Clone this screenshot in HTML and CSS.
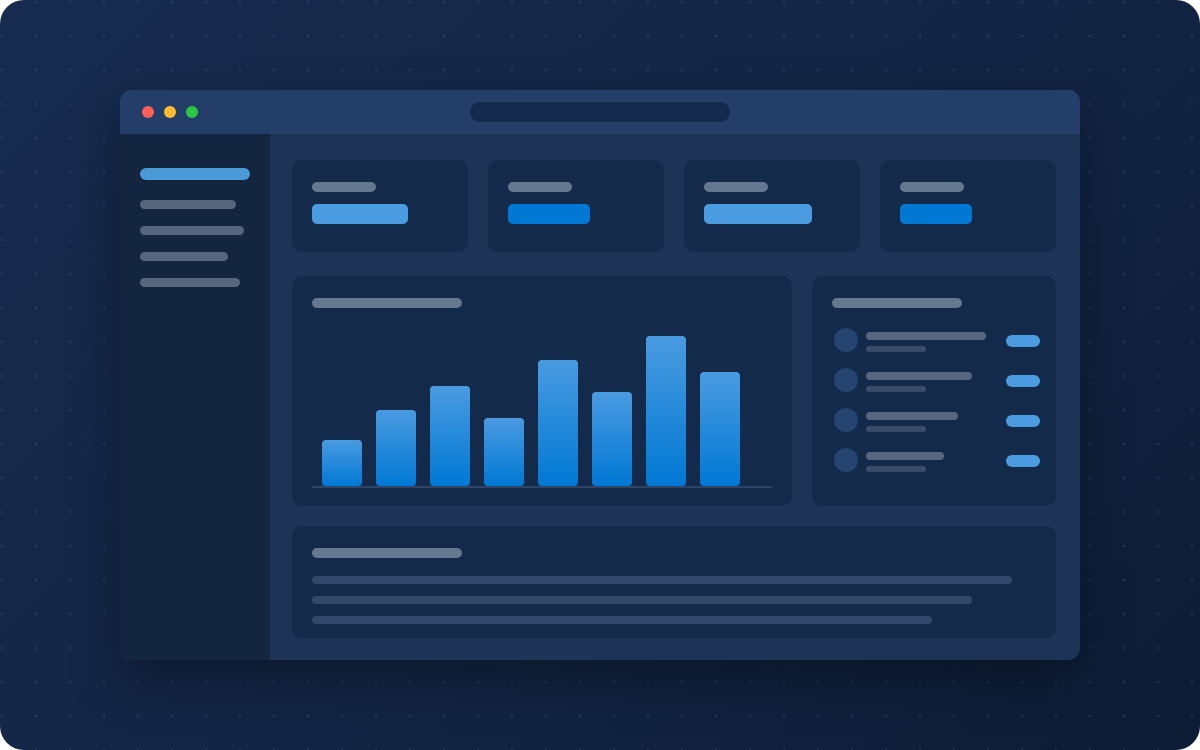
FILE: index.html
```html
<!DOCTYPE html>
<html lang="en">
<head>
<meta charset="utf-8">
<title>Dashboard</title>
<link rel="stylesheet" href="styles.css">
</head>
<body>
<div class="stage">
  <div class="window">
    <div class="titlebar">
      <div class="lights">
        <span class="light red"></span>
        <span class="light yellow"></span>
        <span class="light green"></span>
      </div>
      <div class="address"></div>
    </div>
    <div class="body">
      <aside class="sidebar">
        <div class="nav active"></div>
        <div class="nav" style="width:96px"></div>
        <div class="nav" style="width:104px"></div>
        <div class="nav" style="width:88px"></div>
        <div class="nav" style="width:100px"></div>
      </aside>
      <main class="main">
        <div class="stats">
          <div class="card stat">
            <div class="label"></div>
            <div class="value light-blue" style="width:96px"></div>
          </div>
          <div class="card stat">
            <div class="label"></div>
            <div class="value blue" style="width:82px"></div>
          </div>
          <div class="card stat">
            <div class="label"></div>
            <div class="value light-blue" style="width:108px"></div>
          </div>
          <div class="card stat">
            <div class="label"></div>
            <div class="value blue" style="width:72px"></div>
          </div>
        </div>
        <div class="row">
          <div class="card chart-card">
            <div class="title" style="width:150px"></div>
            <div class="chart">
              <div class="bar" style="height:46px"></div>
              <div class="bar" style="height:76px"></div>
              <div class="bar" style="height:100px"></div>
              <div class="bar" style="height:68px"></div>
              <div class="bar" style="height:126px"></div>
              <div class="bar" style="height:94px"></div>
              <div class="bar" style="height:150px"></div>
              <div class="bar" style="height:114px"></div>
            </div>
          </div>
          <div class="card list-card">
            <div class="title" style="width:130px"></div>
            <div class="list">
              <div class="item">
                <div class="avatar"></div>
                <div class="lines"><div class="l1" style="width:120px"></div><div class="l2"></div></div>
                <div class="pill"></div>
              </div>
              <div class="item">
                <div class="avatar"></div>
                <div class="lines"><div class="l1" style="width:106px"></div><div class="l2"></div></div>
                <div class="pill"></div>
              </div>
              <div class="item">
                <div class="avatar"></div>
                <div class="lines"><div class="l1" style="width:92px"></div><div class="l2"></div></div>
                <div class="pill"></div>
              </div>
              <div class="item">
                <div class="avatar"></div>
                <div class="lines"><div class="l1" style="width:78px"></div><div class="l2"></div></div>
                <div class="pill"></div>
              </div>
            </div>
          </div>
        </div>
        <div class="card text-card">
          <div class="title" style="width:150px"></div>
          <div class="tline" style="width:700px"></div>
          <div class="tline" style="width:660px"></div>
          <div class="tline" style="width:620px"></div>
        </div>
      </main>
    </div>
  </div>
</div>
</body>
</html>
```
FILE: styles.css
```css
* { box-sizing: border-box; }
html, body { margin: 0; padding: 0; background: #ffffff; }
body { font-family: "Liberation Sans", Arial, sans-serif; }

.stage {
  width: 1200px;
  height: 750px;
  border-radius: 24px;
  overflow: hidden;
  padding: 90px 120px;
  background-color: #132645;
  background-image:
    radial-gradient(circle, rgba(120,150,200,0.2) 0.9px, transparent 1.4px),
    linear-gradient(135deg, #172b4f 0%, #132544 55%, #0d1c35 100%);
  background-size: 34px 34px, 100% 100%;
  background-position: -15px -15px, 0 0;
}

.window {
  width: 960px;
  height: 570px;
  border-radius: 12px;
  overflow: hidden;
  display: flex;
  flex-direction: column;
  background: #1d3457;
  box-shadow: 0 20px 50px rgba(0,0,0,0.35);
}

.titlebar {
  height: 44px;
  flex: none;
  background: #233f69;
  display: flex;
  align-items: center;
  position: relative;
  padding-left: 22px;
}
.lights { display: flex; gap: 10px; }
.light { width: 12px; height: 12px; border-radius: 50%; display: block; }
.red { background: #ff5f57; }
.yellow { background: #febc2e; }
.green { background: #28c840; }
.address {
  position: absolute;
  left: 350px;
  top: 12px;
  width: 260px;
  height: 20px;
  border-radius: 10px;
  background: #152a4c;
}

.body { flex: 1; display: flex; min-height: 0; }

.sidebar {
  width: 150px;
  flex: none;
  background: #14253f;
  padding: 34px 20px 0;
  display: flex;
  flex-direction: column;
  gap: 17px;
}
.nav { height: 9px; border-radius: 5px; background: #56667c; }
.nav.active { width: 110px; height: 12px; border-radius: 6px; background: #4a9ad8; margin-bottom: 3px; }

.main {
  flex: 1;
  padding: 26px 24px 22px 22px;
  display: flex;
  flex-direction: column;
}

.card { background: #132a4b; border-radius: 10px; }

.stats { display: flex; gap: 20px; height: 92px; flex: none; }
.stat { flex: 1; padding: 22px 20px; display: flex; flex-direction: column; gap: 12px; }
.label { width: 64px; height: 10px; border-radius: 5px; background: #66788f; }
.value { height: 20px; border-radius: 5px; }
.light-blue { background: #4a9be0; }
.blue { background: #0078d4; }

.row { display: flex; gap: 20px; height: 230px; margin-top: 24px; flex: none; }

.title { height: 10px; border-radius: 5px; background: #66788f; flex: none; }

.chart-card { width: 500px; flex: none; padding: 22px 20px 18px; display: flex; flex-direction: column; }
.chart {
  flex: 1;
  display: flex;
  align-items: flex-end;
  gap: 14px;
  padding: 0 10px;
  border-bottom: 2px solid #2f4565;
}
.bar {
  width: 40px;
  border-radius: 4px;
  background: linear-gradient(180deg, #4a9be0 0%, #0078d4 100%);
}

.list-card { flex: 1; padding: 22px 16px 0 20px; display: flex; flex-direction: column; }
.list { margin-top: 20px; display: flex; flex-direction: column; gap: 16px; }
.item { height: 24px; display: flex; align-items: flex-start; }
.avatar { width: 24px; height: 24px; border-radius: 50%; background: #254470; margin-left: 2px; flex: none; }
.lines { margin-left: 8px; padding-top: 4px; display: flex; flex-direction: column; gap: 6px; }
.l1 { height: 8px; border-radius: 4px; background: #56677f; }
.l2 { width: 60px; height: 6px; border-radius: 3px; background: #3a4c68; }
.pill { margin-left: auto; margin-top: 7px; width: 34px; height: 12px; border-radius: 6px; background: #4a9be0; }

.text-card { margin-top: 20px; height: 112px; flex: none; padding: 22px 20px 14px; display: flex; flex-direction: column; }
.tline { height: 8px; border-radius: 4px; background: #33486a; margin-top: 12px; flex: none; }
.text-card .title + .tline { margin-top: 18px; }
```
